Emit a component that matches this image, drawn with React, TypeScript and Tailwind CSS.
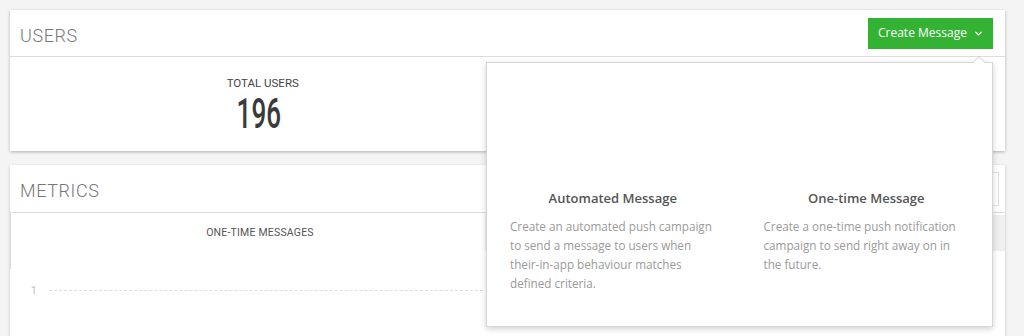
import React from 'react';
import { ChevronDown } from 'lucide-react';

const sans = { fontFamily: 'Roboto, "Open Sans", sans-serif' };

function CreateMenu() {
  return (
    <div className="absolute right-0 top-[44px] z-10 w-[507px] h-[265px] bg-white border border-[#d6d6d6] shadow-[0_2px_6px_rgba(0,0,0,0.18)] font-['Open_Sans',sans-serif]">
      {/* caret */}
      <div className="absolute -top-[7px] right-[6px] w-0 h-0 border-x-[7px] border-x-transparent border-b-[7px] border-b-[#d0d0d0]" />
      <div className="absolute -top-[6px] right-[7px] w-0 h-0 border-x-[6px] border-x-transparent border-b-[6px] border-b-white" />
      <div className="grid grid-cols-2 gap-x-[48px] px-[23px] pt-[127px]">
        <div>
          <div className="text-center text-[13px] leading-[16px] font-semibold text-[#555]">Automated Message</div>
          <p className="mt-[11px] text-[11.7px] leading-[19px] text-[#9a9a9a] whitespace-nowrap">
            Create an automated push campaign<br />
            to send a message to users when<br />
            their-in-app behaviour matches<br />
            defined criteria.
          </p>
        </div>
        <div>
          <div className="text-center text-[13px] leading-[16px] font-semibold text-[#555]">One-time Message</div>
          <p className="mt-[11px] text-[11.7px] leading-[19px] text-[#9a9a9a] whitespace-nowrap">
            Create a one-time push notification<br />
            campaign to send right away on in<br />
            the future.
          </p>
        </div>
      </div>
    </div>
  );
}

export default function App() {
  return (
    <div className="h-[336px] overflow-hidden bg-[#f4f4f4] pt-[10px] pl-[10px] pr-[19px]" style={sans}>
      {/* Users card */}
      <div className="bg-white shadow-[0_1px_3px_rgba(0,0,0,0.28)]">
        <div className="h-[47px] flex items-center justify-between pl-[10px] pr-[12px] border-b border-[#dcdcdc]">
          <h2 className="pt-[4px] text-[18px] font-light text-[#777] tracking-[0.6px]">USERS</h2>
          <div className="relative">
            <button className="h-[31px] w-[125px] flex items-center justify-between pl-[10px] pr-[9px] bg-[#34b234] text-white text-[12px] whitespace-nowrap font-['Open_Sans',sans-serif]">
              <span>Create Message</span>
              <ChevronDown size={11} strokeWidth={3} />
            </button>
            <CreateMenu />
          </div>
        </div>
        <div className="h-[94px] grid grid-cols-2">
          <div className="flex flex-col items-center pt-[19px] pl-[8px]">
            <div className="text-[11.5px] leading-[14px] font-normal text-[#444]">TOTAL USERS</div>
            <div className="mt-[2px] mr-[8px] text-[42px] leading-[44px] font-medium text-[#3a3a3a] inline-block scale-x-[0.62]">196</div>
          </div>
          <div />
        </div>
      </div>

      {/* Metrics card */}
      <div className="mt-[14px] bg-white shadow-[0_1px_3px_rgba(0,0,0,0.2)] h-[200px]">
        <div className="h-[48px] flex items-center justify-between pl-[10px] pr-[6px] border-b border-[#dcdcdc]">
          <h2 className="pt-[4px] text-[18px] font-light text-[#777] tracking-[0.6px]">METRICS</h2>
          <div className="w-[150px] h-[34px] border border-[#e2e2e2] bg-white" />
        </div>
        <div className="flex">
          <div className="w-[475px] border-l border-[#ddd] h-[56px] shrink-0 relative">
            <div className="pt-[13px] text-center pl-[24px] text-[10.5px] leading-[14px] text-[#555] tracking-[0.2px]">ONE-TIME MESSAGES</div>
            <div className="absolute left-[20px] top-[70px] flex items-center w-[452px]">
              <span className="text-[10px] text-[#bbb] w-[18px]">1</span>
              <div className="flex-1 border-t border-dashed border-[#ddd]" />
            </div>
          </div>
          <div className="flex-1">
            <div className="mt-[2px] h-[36px] bg-[#efefef]" />
          </div>
        </div>
      </div>
    </div>
  );
}
